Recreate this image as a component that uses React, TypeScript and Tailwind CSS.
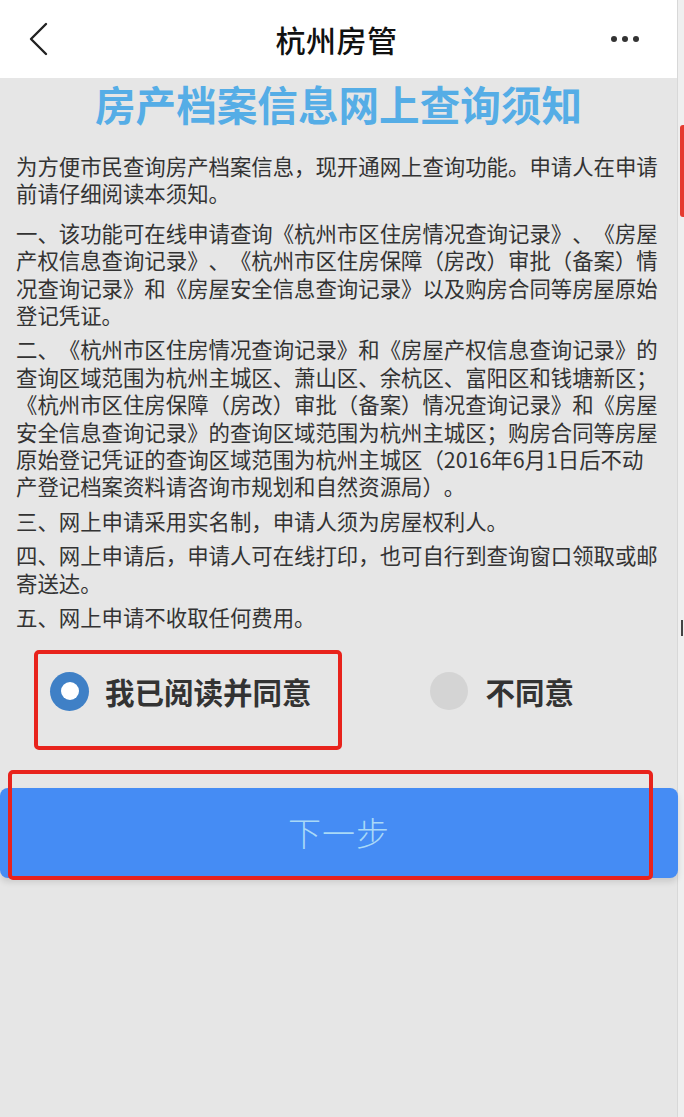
import React from "react";

const F = { fontFamily: '"Noto Sans CJK SC", "Noto Sans", sans-serif' };

const paras: string[][] = [
  [
    "为方便市民查询房产档案信息，现开通网上查询功能。申请人在申请",
    "前请仔细阅读本须知。",
  ],
  [
    "一、该功能可在线申请查询《杭州市区住房情况查询记录》、《房屋",
    "产权信息查询记录》、《杭州市区住房保障（房改）审批（备案）情",
    "况查询记录》和《房屋安全信息查询记录》以及购房合同等房屋原始",
    "登记凭证。",
  ],
  [
    "二、《杭州市区住房情况查询记录》和《房屋产权信息查询记录》的",
    "查询区域范围为杭州主城区、萧山区、余杭区、富阳区和钱塘新区；",
    "《杭州市区住房保障（房改）审批（备案）情况查询记录》和《房屋",
    "安全信息查询记录》的查询区域范围为杭州主城区；购房合同等房屋",
    "原始登记凭证的查询区域范围为杭州主城区（2016年6月1日后不动",
    "产登记档案资料请咨询市规划和自然资源局）。",
  ],
  ["三、网上申请采用实名制，申请人须为房屋权利人。"],
  [
    "四、网上申请后，申请人可在线打印，也可自行到查询窗口领取或邮",
    "寄送达。",
  ],
  ["五、网上申请不收取任何费用。"],
];

export default function App() {
  return (
    <div
      className="flex w-[684px] min-h-[1117px] bg-[#e6e6e6] [text-spacing-trim:space-all]"
      style={F}
    >
      <div className="w-[677px] flex flex-col">
        {/* Header */}
        <div className="h-[78px] bg-white flex items-center justify-between pl-[28px] pr-[38px]">
          <svg width="22" height="34" viewBox="0 0 22 34">
            <polyline
              points="18,2 3,17 18,32"
              fill="none"
              stroke="#222"
              strokeWidth="2.4"
              strokeLinecap="round"
              strokeLinejoin="round"
            />
          </svg>
          <div className="text-[30px] font-medium text-[#111] ml-[12px] tracking-[0.5px]">
            杭州房管
          </div>
          <div className="flex gap-[5px] items-center">
            <span className="w-[6px] h-[6px] rounded-full bg-[#333]" />
            <span className="w-[6px] h-[6px] rounded-full bg-[#333]" />
            <span className="w-[6px] h-[6px] rounded-full bg-[#333]" />
          </div>
        </div>

        {/* Title */}
        <div className="mt-[2px] h-[48px] flex items-center justify-center text-[40.6px] font-bold text-[#55ade6] leading-[48px]">
          房产档案信息网上查询须知
        </div>

        {/* Body */}
        <div className="mt-[24px] pl-[16px] text-[21.4px] leading-[27.4px] text-[#333] flex flex-col">
          {paras.map((p, i) => (
            <div key={i} className={i === 0 ? "mb-[12px]" : "mb-[7px]"}>
              {p.map((l, j) => (
                <div key={j} className="whitespace-nowrap">
                  {l}
                </div>
              ))}
            </div>
          ))}
        </div>

        {/* Radio row */}
        <div className="relative mt-[4px] h-[110px]">
          <div className="flex items-start pt-[30px]">
            <div className="ml-[50px] w-[39px] h-[39px] rounded-full bg-[#3f80c6] flex items-center justify-center">
              <div className="w-[18px] h-[18px] rounded-full bg-white" />
            </div>
            <div className="ml-[16px] text-[29.5px] font-bold text-[#333] leading-[39px]">
              我已阅读并同意
            </div>
            <div className="ml-[118px] w-[38px] h-[38px] rounded-full bg-[#d4d4d4]" />
            <div className="ml-[18px] text-[29.5px] font-bold text-[#333] leading-[39px]">
              不同意
            </div>
          </div>
          <div className="absolute left-[34px] top-[8px] w-[308px] h-[100px] border-[4px] border-[#e8231c] rounded-[5px]" />
        </div>

        {/* Button */}
        <div className="relative mt-[36px]">
          <div className="h-[90px] w-[678px] bg-[#458cf4] rounded-[8px] flex items-center justify-center shadow-[0_4px_6px_rgba(0,0,0,0.12)]">
            <span className="text-[33px] font-light text-[#a9d9f7] tracking-[1px]">
              下一步
            </span>
          </div>
          <div className="absolute left-[8px] top-[-18px] w-[645px] h-[110px] border-[4px] border-[#e8231c] rounded-[5px]" />
        </div>
      </div>

      {/* Right edge strip */}
      <div className="w-[7px] bg-[#efefef] border-l border-[#d8d8d8] flex flex-col">
        <div className="mt-[125px] ml-[2px] h-[92px] w-[5px] bg-[#e53a2f] rounded-l-[3px]" />
        <div className="mt-[403px] ml-[3px] h-[16px] w-[2px] bg-[#444]" />
      </div>
    </div>
  );
}
